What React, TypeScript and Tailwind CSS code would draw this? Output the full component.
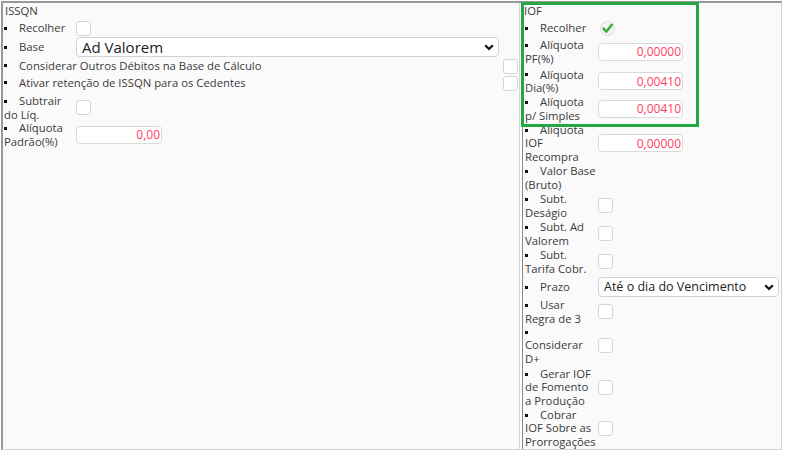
import type { ReactNode } from "react";

type RowProps = {
  lines: string[];
  control?: ReactNode;
  box: string;
  labelBox: string;
  bulletAlone?: boolean;
};

function Bullet() {
  return <span className="inline-block w-[3px] h-[3px] bg-[#111] mr-[12px] align-middle mb-[2px]" />;
}

function Checkbox() {
  return <span className="block w-[15px] h-[15px] rounded-[3px] border border-[#d6d6d6] bg-white" />;
}

function CheckedIcon() {
  return (
    <svg width="15" height="15" viewBox="0 0 15 15" className="block">
      <circle cx="7.5" cy="7.5" r="7" fill="#f4f4f4" stroke="#dcdcdc" />
      <path d="M3.6 7.6 L6.4 10.6 L11.8 3.8" fill="none" stroke="#3fae3f" strokeWidth="2.6" strokeLinecap="round" strokeLinejoin="round" />
    </svg>
  );
}

function NumInput({ value, w }: { value: string; w: string }) {
  return (
    <input
      readOnly
      value={value}
      className={`${w} h-[18px] rounded-[4px] border border-[#dadada] bg-white pr-px text-right text-[12px] leading-[16px] text-[#ff3e5f] outline-none`}
    />
  );
}

function Select({ value, w, text }: { value: string; w: string; text: string }) {
  return (
    <div className={`relative ${w} h-[20px]`}>
      <select
        value={value}
        onChange={() => {}}
        className={`w-full h-full appearance-none rounded-[4px] border border-[#d3d3d3] bg-white pl-[5px] ${text} leading-[18px] text-[#222] outline-none`}
      >
        <option>{value}</option>
      </select>
      <svg width="10" height="7" viewBox="0 0 10 7" className="absolute right-[5px] top-[7px] pointer-events-none">
        <path d="M1.2 1.2 L5 5 L8.8 1.2" fill="none" stroke="#111" strokeWidth="2.2" />
      </svg>
    </div>
  );
}

function Row({ lines, control, box, labelBox, bulletAlone }: RowProps) {
  return (
    <div className={`flex items-center ${box}`}>
      <div className={`${labelBox} leading-[13.3px]`}>
        <Bullet />
        {bulletAlone ? <br /> : null}
        {lines.map((l, i) => (
          <span key={i}>
            {i > 0 && <br />}
            {l}
          </span>
        ))}
      </div>
      {control}
    </div>
  );
}

export default function App() {
  const L = "w-[73px] shrink-0 pl-px";
  const R = "w-[75px] shrink-0 pl-[2px]";

  return (
    <div className="bg-white pl-px pt-px w-[787px] h-[454px] font-['Open_Sans',sans-serif] text-[11.3px] text-[#3a3a3a]">
      <div className="flex w-[781px] h-[449px] border-t-2 border-l-2 border-[#999] border-r border-b border-r-[#d2d2d2] border-b-[#d2d2d2]">
        {/* ISSQN */}
        <section className="w-[517px] h-full bg-[#fafafa] border-r border-[#d6d6d6]">
          <div className="h-[14px] leading-[14px] pl-[2px] mt-px">ISSQN</div>
          <Row box="mt-[2px] h-[16px]" labelBox={L} lines={["Recolher"]} control={<Checkbox />} />
          <Row box="mt-px h-[20px]" labelBox={L} lines={["Base"]} control={<Select value="Ad Valorem" w="w-[423px]" text="text-[15px]" />} />
          <div className="mt-px h-[16px] flex items-center justify-between pl-px pr-px">
            <span><Bullet />Considerar Outros Débitos na Base de Cálculo</span>
            <Checkbox />
          </div>
          <div className="mt-px h-[16px] flex items-center justify-between pl-px pr-px">
            <span><Bullet />Ativar retenção de ISSQN para os Cedentes</span>
            <Checkbox />
          </div>
          <Row box="mt-[3px] h-[27px]" labelBox={L} lines={["Subtrair", "do Líq."]} control={<Checkbox />} />
          <Row box="h-[27px]" labelBox={L} lines={["Alíquota", "Padrão(%)"]} control={<NumInput value="0,00" w="w-[86px]" />} />
        </section>

        {/* IOF */}
        <section className="relative ml-[2px] flex-1 h-full bg-[#fafafa] border-l border-[#8a8a8a]">
          <div className="h-[14px] leading-[14px] pl-px mt-px">IOF</div>
          <Row box="mt-[2px] h-[16px]" labelBox={R} lines={["Recolher"]} control={<span className="ml-[2px]"><CheckedIcon /></span>} />
          <Row box="mt-[2px] h-[27px]" labelBox={R} lines={["Alíquota", "PF(%)"]} control={<NumInput value="0,00000" w="w-[85px]" />} />
          <Row box="mt-[2px] h-[28px]" labelBox={R} lines={["Alíquota", "Dia(%)"]} control={<NumInput value="0,00410" w="w-[85px]" />} />
          <Row box="h-[27px]" labelBox={R} lines={["Alíquota", "p/ Simples"]} control={<NumInput value="0,00410" w="w-[85px]" />} />
          <Row box="mt-px h-[40px]" labelBox={R} lines={["Alíquota", "IOF", "Recompra"]} control={<NumInput value="0,00000" w="w-[85px]" />} />
          <Row box="mt-px h-[27px]" labelBox={R} lines={["Valor Base", "(Bruto)"]} />
          <Row box="mt-px h-[27px]" labelBox={R} lines={["Subt.", "Deságio"]} control={<Checkbox />} />
          <Row box="mt-px h-[27px]" labelBox={R} lines={["Subt. Ad", "Valorem"]} control={<Checkbox />} />
          <Row box="mt-px h-[27px]" labelBox={R} lines={["Subt.", "Tarifa Cobr."]} control={<Checkbox />} />
          <Row box="mt-px h-[22px]" labelBox={R} lines={["Prazo"]} control={<Select value="Até o dia do Vencimento" w="w-[181px]" text="text-[12.5px]" />} />
          <Row box="h-[27px]" labelBox={R} lines={["Usar", "Regra de 3"]} control={<Checkbox />} />
          <Row box="h-[40px]" labelBox={R} bulletAlone lines={["Considerar", "D+"]} control={<Checkbox />} />
          <Row box="mt-[2px] h-[40px]" labelBox={R} lines={["Gerar IOF", "de Fomento", "a Produção"]} control={<Checkbox />} />
          <Row box="mt-px h-[40px]" labelBox={R} lines={["Cobrar", "IOF Sobre as", "Prorrogações"]} control={<Checkbox />} />

          <div className="absolute left-[-2px] top-[-1px] w-[178px] h-[125px] border-[3px] border-[#22a845] pointer-events-none" />
        </section>
      </div>
    </div>
  );
}
